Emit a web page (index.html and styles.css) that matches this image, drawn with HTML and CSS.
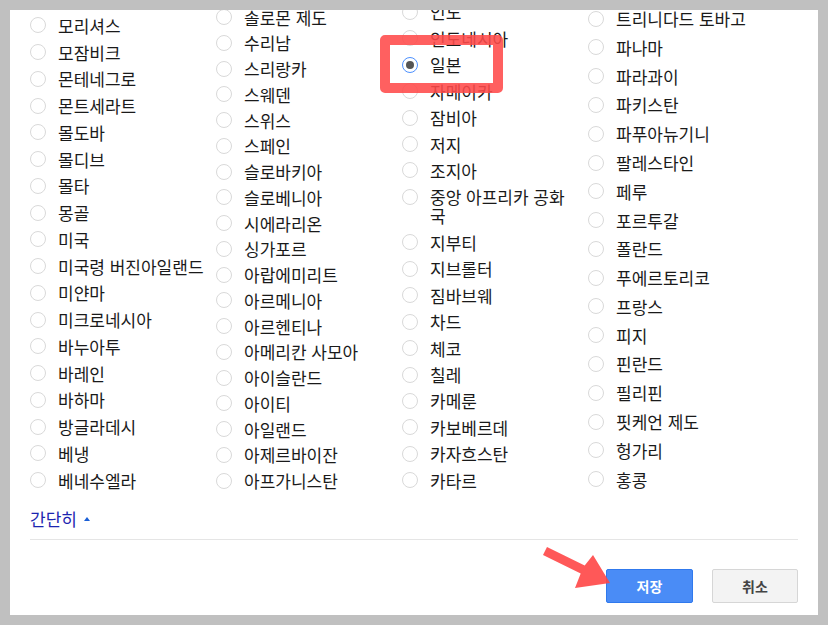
FILE: index.html
```html
<!DOCTYPE html>
<html lang="ko">
<head>
<meta charset="utf-8">
<title>위치 설정</title>
<link rel="stylesheet" href="styles.css">
</head>
<body>
<div class="panel">
  <div class="list-wrap">
    <div class="columns">
      <ul class="col col-a">
        <li class="item"><span class="radio"></span><span class="label">모리셔스</span></li>
        <li class="item"><span class="radio"></span><span class="label">모잠비크</span></li>
        <li class="item"><span class="radio"></span><span class="label">몬테네그로</span></li>
        <li class="item"><span class="radio"></span><span class="label">몬트세라트</span></li>
        <li class="item"><span class="radio"></span><span class="label">몰도바</span></li>
        <li class="item"><span class="radio"></span><span class="label">몰디브</span></li>
        <li class="item"><span class="radio"></span><span class="label">몰타</span></li>
        <li class="item"><span class="radio"></span><span class="label">몽골</span></li>
        <li class="item"><span class="radio"></span><span class="label">미국</span></li>
        <li class="item"><span class="radio"></span><span class="label">미국령 버진아일랜드</span></li>
        <li class="item"><span class="radio"></span><span class="label">미얀마</span></li>
        <li class="item"><span class="radio"></span><span class="label">미크로네시아</span></li>
        <li class="item"><span class="radio"></span><span class="label">바누아투</span></li>
        <li class="item"><span class="radio"></span><span class="label">바레인</span></li>
        <li class="item"><span class="radio"></span><span class="label">바하마</span></li>
        <li class="item"><span class="radio"></span><span class="label">방글라데시</span></li>
        <li class="item"><span class="radio"></span><span class="label">베냉</span></li>
        <li class="item"><span class="radio"></span><span class="label">베네수엘라</span></li>
      </ul>
      <ul class="col col-b">
        <li class="item"><span class="radio"></span><span class="label">솔로몬 제도</span></li>
        <li class="item"><span class="radio"></span><span class="label">수리남</span></li>
        <li class="item"><span class="radio"></span><span class="label">스리랑카</span></li>
        <li class="item"><span class="radio"></span><span class="label">스웨덴</span></li>
        <li class="item"><span class="radio"></span><span class="label">스위스</span></li>
        <li class="item"><span class="radio"></span><span class="label">스페인</span></li>
        <li class="item"><span class="radio"></span><span class="label">슬로바키아</span></li>
        <li class="item"><span class="radio"></span><span class="label">슬로베니아</span></li>
        <li class="item"><span class="radio"></span><span class="label">시에라리온</span></li>
        <li class="item"><span class="radio"></span><span class="label">싱가포르</span></li>
        <li class="item"><span class="radio"></span><span class="label">아랍에미리트</span></li>
        <li class="item"><span class="radio"></span><span class="label">아르메니아</span></li>
        <li class="item"><span class="radio"></span><span class="label">아르헨티나</span></li>
        <li class="item"><span class="radio"></span><span class="label">아메리칸 사모아</span></li>
        <li class="item"><span class="radio"></span><span class="label">아이슬란드</span></li>
        <li class="item"><span class="radio"></span><span class="label">아이티</span></li>
        <li class="item"><span class="radio"></span><span class="label">아일랜드</span></li>
        <li class="item"><span class="radio"></span><span class="label">아제르바이잔</span></li>
        <li class="item"><span class="radio"></span><span class="label">아프가니스탄</span></li>
      </ul>
      <ul class="col col-c">
        <li class="item"><span class="radio"></span><span class="label">인도</span></li>
        <li class="item"><span class="radio"></span><span class="label">인도네시아</span></li>
        <li class="item"><span class="radio checked"></span><span class="label">일본</span></li>
        <li class="item"><span class="radio"></span><span class="label">자메이카</span></li>
        <li class="item"><span class="radio"></span><span class="label">잠비아</span></li>
        <li class="item"><span class="radio"></span><span class="label">저지</span></li>
        <li class="item"><span class="radio"></span><span class="label">조지아</span></li>
        <li class="item"><span class="radio"></span><span class="label">중앙 아프리카 공화국</span></li>
        <li class="item"><span class="radio"></span><span class="label">지부티</span></li>
        <li class="item"><span class="radio"></span><span class="label">지브롤터</span></li>
        <li class="item"><span class="radio"></span><span class="label">짐바브웨</span></li>
        <li class="item"><span class="radio"></span><span class="label">차드</span></li>
        <li class="item"><span class="radio"></span><span class="label">체코</span></li>
        <li class="item"><span class="radio"></span><span class="label">칠레</span></li>
        <li class="item"><span class="radio"></span><span class="label">카메룬</span></li>
        <li class="item"><span class="radio"></span><span class="label">카보베르데</span></li>
        <li class="item"><span class="radio"></span><span class="label">카자흐스탄</span></li>
        <li class="item"><span class="radio"></span><span class="label">카타르</span></li>
      </ul>
      <ul class="col col-d">
        <li class="item"><span class="radio"></span><span class="label">트리니다드 토바고</span></li>
        <li class="item"><span class="radio"></span><span class="label">파나마</span></li>
        <li class="item"><span class="radio"></span><span class="label">파라과이</span></li>
        <li class="item"><span class="radio"></span><span class="label">파키스탄</span></li>
        <li class="item"><span class="radio"></span><span class="label">파푸아뉴기니</span></li>
        <li class="item"><span class="radio"></span><span class="label">팔레스타인</span></li>
        <li class="item"><span class="radio"></span><span class="label">페루</span></li>
        <li class="item"><span class="radio"></span><span class="label">포르투갈</span></li>
        <li class="item"><span class="radio"></span><span class="label">폴란드</span></li>
        <li class="item"><span class="radio"></span><span class="label">푸에르토리코</span></li>
        <li class="item"><span class="radio"></span><span class="label">프랑스</span></li>
        <li class="item"><span class="radio"></span><span class="label">피지</span></li>
        <li class="item"><span class="radio"></span><span class="label">핀란드</span></li>
        <li class="item"><span class="radio"></span><span class="label">필리핀</span></li>
        <li class="item"><span class="radio"></span><span class="label">핏케언 제도</span></li>
        <li class="item"><span class="radio"></span><span class="label">헝가리</span></li>
        <li class="item"><span class="radio"></span><span class="label">홍콩</span></li>
      </ul>
    </div>
  </div>
  <div class="toggle"><span class="toggle-text">간단히</span><span class="caret"></span></div>
  <div class="divider"></div>
  <div class="actions">
    <button class="btn btn-primary">저장</button>
    <button class="btn btn-default">취소</button>
  </div>
</div>
<div class="highlight"></div>
<svg class="arrow" width="80" height="55" viewBox="0 0 80 55">
  <polygon points="7,7 44.7,25.6 53,15 70,43 35,48 40.7,33.6 3,15" fill="rgba(255,70,70,0.9)"/>
</svg>
</body>
</html>
```
FILE: styles.css
```css
html, body {
  margin: 0;
  padding: 0;
}
body {
  width: 828px;
  height: 625px;
  overflow: hidden;
  background: #c0c0c0;
  font-family: "Noto Sans CJK KR", "Noto Sans", sans-serif;
  color: #1a1a1a;
  position: relative;
}
.panel {
  margin: 10px;
  width: 808px;
  height: 605px;
  box-sizing: border-box;
  background: #fff;
  padding: 0 20px 12px;
  display: flex;
  flex-direction: column;
}
.list-wrap {
  flex: 1;
  min-height: 0;
  overflow: hidden;
  display: flex;
  flex-direction: column;
  justify-content: flex-end;
}
.columns {
  display: grid;
  grid-template-columns: repeat(4, 186px);
  align-items: end;
}
.col {
  list-style: none;
  margin: 0;
  padding: 0;
}
.col-a { --pad: 3.88px; }
.col-b { --pad: 3.39px; }
.col-c { --pad: 3.72px; }
.col-d { --pad: 4.9px; }
.item {
  display: flex;
  align-items: flex-start;
  gap: 12px;
  padding: var(--pad) 0;
}
.radio {
  flex: none;
  width: 16px;
  height: 16px;
  box-sizing: border-box;
  border: 1px solid #d9d9d9;
  border-radius: 50%;
  margin-top: 1.5px;
  display: flex;
  align-items: center;
  justify-content: center;
}
.radio.checked {
  border-color: #4d90fe;
}
.radio.checked::after {
  content: "";
  width: 8px;
  height: 8px;
  border-radius: 50%;
  background: #555;
}
.label {
  width: 148px;
  font-size: 17px;
  line-height: 19px;
}
.toggle {
  margin-top: 15px;
  font-size: 17px;
  line-height: 19px;
  color: #1c25b0;
  display: flex;
  align-items: center;
}
.caret {
  width: 0;
  height: 0;
  border-left: 3.5px solid transparent;
  border-right: 3.5px solid transparent;
  border-bottom: 4px solid #1a5fd6;
  margin-left: 7px;
  margin-top: 1px;
}
.divider {
  margin-top: 11.5px;
  height: 1px;
  background: #e5e5e5;
}
.actions {
  margin-top: 29px;
  display: flex;
  justify-content: flex-end;
  gap: 19px;
}
.btn {
  height: 34px;
  box-sizing: border-box;
  border-radius: 2px;
  font-family: "Noto Sans CJK KR", "Noto Sans", sans-serif;
  font-size: 14px;
  font-weight: bold;
  padding: 0;
}
.btn-primary {
  width: 87px;
  background: #4a8cf6;
  border: 1px solid #3079ed;
  color: #fff;
}
.btn-default {
  width: 86px;
  background: #f3f3f3;
  border: 1px solid #d6d6d6;
  color: #444;
}
.highlight {
  position: absolute;
  left: 380px;
  top: 35px;
  width: 123px;
  height: 58px;
  box-sizing: border-box;
  border: 10px solid rgba(255, 74, 74, 0.88);
  border-radius: 5px;
}
.arrow {
  position: absolute;
  left: 540px;
  top: 540px;
}
```
